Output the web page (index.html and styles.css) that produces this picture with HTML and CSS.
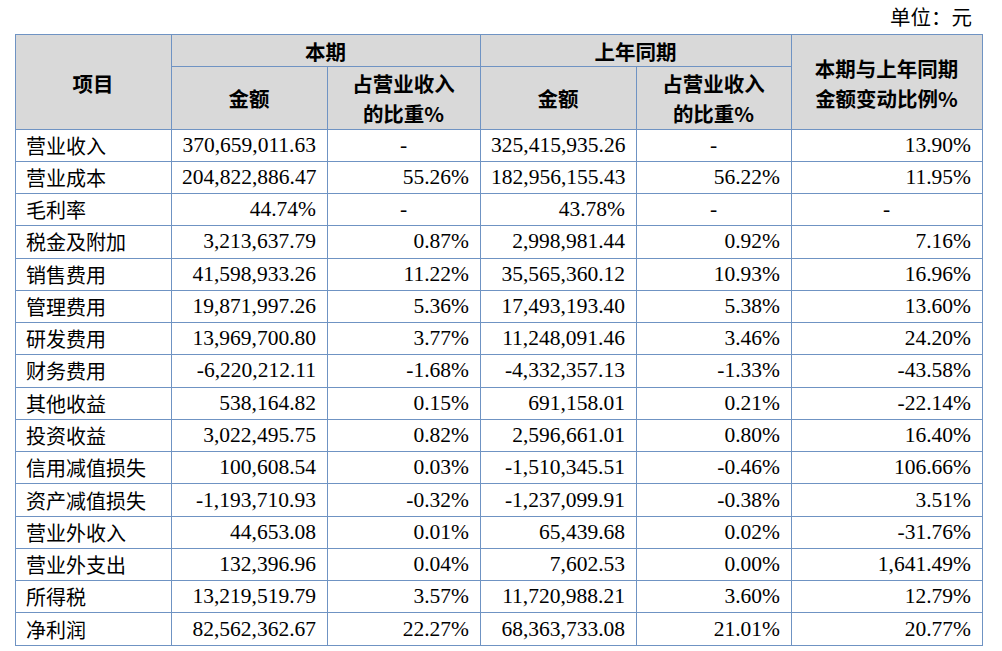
FILE: index.html
```html
<!DOCTYPE html>
<html lang="zh-CN">
<head>
<meta charset="utf-8">
<link rel="stylesheet" href="styles.css">
</head>
<body>
<div class="page">
  <div class="unit">单位：元</div>
  <table class="fin">
    <colgroup>
      <col class="c1"><col class="c2"><col class="c3"><col class="c4"><col class="c5"><col class="c6">
    </colgroup>
    <thead>
      <tr class="h1">
        <th rowspan="2">项目</th>
        <th colspan="2">本期</th>
        <th colspan="2">上年同期</th>
        <th rowspan="2">本期与上年同期<br>金额变动比例%</th>
      </tr>
      <tr class="h2">
        <th>金额</th>
        <th>占营业收入<br>的比重%</th>
        <th>金额</th>
        <th>占营业收入<br>的比重%</th>
      </tr>
    </thead>
    <tbody>
      <tr><td class="name">营业收入</td><td>370,659,011.63</td><td class="dash">-</td><td>325,415,935.26</td><td class="dash">-</td><td>13.90%</td></tr>
      <tr><td class="name">营业成本</td><td>204,822,886.47</td><td>55.26%</td><td>182,956,155.43</td><td>56.22%</td><td>11.95%</td></tr>
      <tr><td class="name">毛利率</td><td>44.74%</td><td class="dash">-</td><td>43.78%</td><td class="dash">-</td><td class="dash">-</td></tr>
      <tr><td class="name">税金及附加</td><td>3,213,637.79</td><td>0.87%</td><td>2,998,981.44</td><td>0.92%</td><td>7.16%</td></tr>
      <tr><td class="name">销售费用</td><td>41,598,933.26</td><td>11.22%</td><td>35,565,360.12</td><td>10.93%</td><td>16.96%</td></tr>
      <tr><td class="name">管理费用</td><td>19,871,997.26</td><td>5.36%</td><td>17,493,193.40</td><td>5.38%</td><td>13.60%</td></tr>
      <tr><td class="name">研发费用</td><td>13,969,700.80</td><td>3.77%</td><td>11,248,091.46</td><td>3.46%</td><td>24.20%</td></tr>
      <tr><td class="name">财务费用</td><td>-6,220,212.11</td><td>-1.68%</td><td>-4,332,357.13</td><td>-1.33%</td><td>-43.58%</td></tr>
      <tr><td class="name">其他收益</td><td>538,164.82</td><td>0.15%</td><td>691,158.01</td><td>0.21%</td><td>-22.14%</td></tr>
      <tr><td class="name">投资收益</td><td>3,022,495.75</td><td>0.82%</td><td>2,596,661.01</td><td>0.80%</td><td>16.40%</td></tr>
      <tr><td class="name">信用减值损失</td><td>100,608.54</td><td>0.03%</td><td>-1,510,345.51</td><td>-0.46%</td><td>106.66%</td></tr>
      <tr><td class="name">资产减值损失</td><td>-1,193,710.93</td><td>-0.32%</td><td>-1,237,099.91</td><td>-0.38%</td><td>3.51%</td></tr>
      <tr><td class="name">营业外收入</td><td>44,653.08</td><td>0.01%</td><td>65,439.68</td><td>0.02%</td><td>-31.76%</td></tr>
      <tr><td class="name">营业外支出</td><td>132,396.96</td><td>0.04%</td><td>7,602.53</td><td>0.00%</td><td>1,641.49%</td></tr>
      <tr><td class="name">所得税</td><td>13,219,519.79</td><td>3.57%</td><td>11,720,988.21</td><td>3.60%</td><td>12.79%</td></tr>
      <tr><td class="name">净利润</td><td>82,562,362.67</td><td>22.27%</td><td>68,363,733.08</td><td>21.01%</td><td>20.77%</td></tr>
    </tbody>
  </table>
</div>
</body>
</html>
```
FILE: styles.css
```css
html, body {
  margin: 0;
  padding: 0;
  background: #ffffff;
}
.page {
  padding: 0 0 0 15px;
  width: 967px;
  font-family: "Liberation Serif", "Noto Sans CJK SC", serif;
  color: #000;
}
.unit {
  height: 34px;
  line-height: 36px;
  text-align: right;
  font-size: 20.5px;
  padding-right: 10px;
  box-sizing: border-box;
}
.fin {
  border-collapse: collapse;
  table-layout: fixed;
  width: 967px;
  font-size: 21.5px;
}
.c1 { width: 156px; }
.c2 { width: 156px; }
.c3 { width: 153px; }
.c4 { width: 156px; }
.c5 { width: 155px; }
.c6 { width: 191px; }
.fin th, .fin td {
  border: 1px solid #6f93c3;
  padding: 0 11px 0 10px;
}
.fin th {
  background: #d9d9d9;
  font-family: "Noto Sans CJK SC", sans-serif;
  font-weight: 700;
  font-size: 20.5px;
  line-height: 30px;
  text-align: center;
}
.h1 th { height: 31px; }
.h1 th[rowspan] { padding-top: 2px; }
.h2 th { height: 61.5px; }
.fin td {
  height: 31.28px;
  line-height: 31px;
  text-align: right;
  white-space: nowrap;
}
.fin td.name {
  text-align: left;
  font-family: "Noto Sans CJK SC", sans-serif;
  font-size: 20px;
  padding-left: 10px;
}
.fin td.dash {
  text-align: center;
}
```
